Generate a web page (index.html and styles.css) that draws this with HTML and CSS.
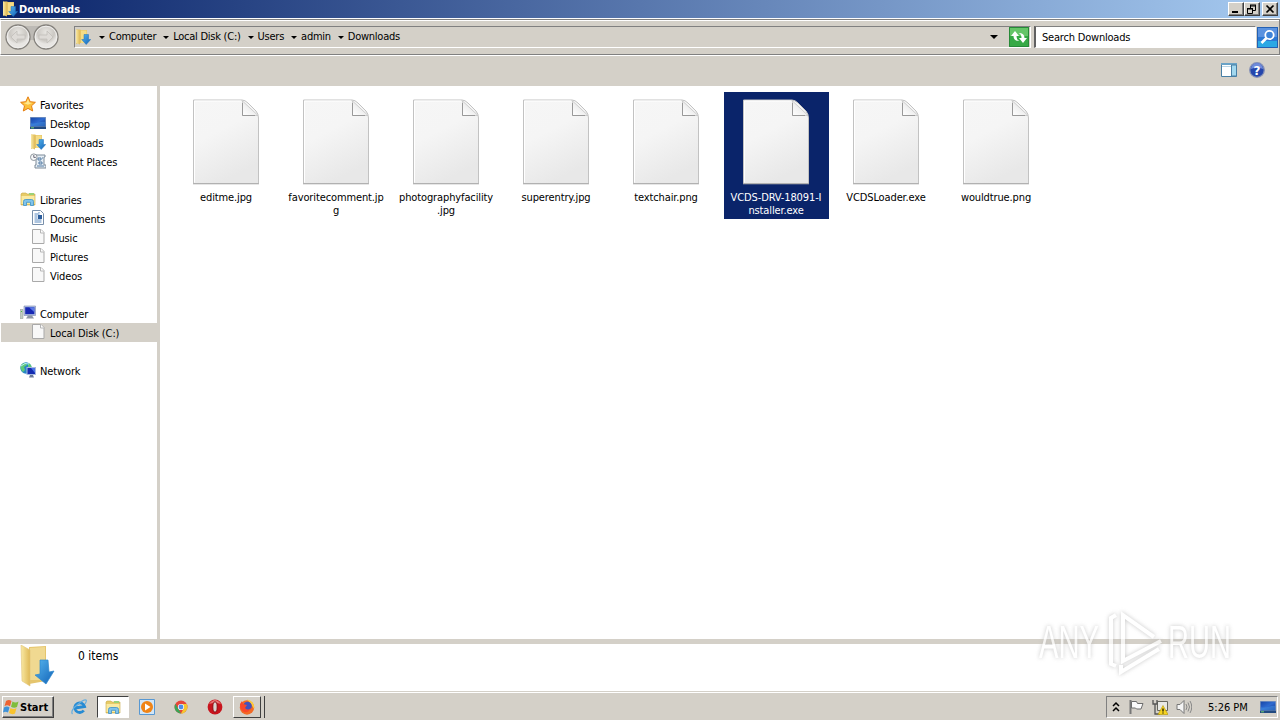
FILE: index.html
```html
<!DOCTYPE html>
<html lang="en">
<head>
    <meta charset="UTF-8">
    <title>Downloads</title>
    <link rel="stylesheet" href="styles.css">
</head>
<body>
    <!-- shared icons -->
    <svg class="defs" width="0" height="0">
        <defs>
            <linearGradient id="gold" x1="0" x2="1"><stop offset="0" stop-color="#f9e9a4"/><stop offset="1" stop-color="#dfb956"/></linearGradient>
            <linearGradient id="blue" x1="0" x2="1" y2="1"><stop offset="0" stop-color="#56b5ee"/><stop offset="1" stop-color="#1263b8"/></linearGradient>
            <linearGradient id="screen" x1="0" x2="1" y2="1"><stop offset="0" stop-color="#1746a8"/><stop offset=".5" stop-color="#2e6bd0"/><stop offset="1" stop-color="#0c2f86"/></linearGradient>
            <linearGradient id="paper" x1="0" x2=".4" y2="1"><stop offset="0" stop-color="#f6f6f6"/><stop offset=".45" stop-color="#f5f5f5"/><stop offset="1" stop-color="#e8e8e8"/></linearGradient>
            <linearGradient id="fold" x1="0" y1="1" x2="1" y2="0"><stop offset="0" stop-color="#fff"/><stop offset=".5" stop-color="#eee"/><stop offset="1" stop-color="#bbb"/></linearGradient>
            <radialGradient id="orb" cx=".5" cy=".3"><stop offset="0" stop-color="#e8e6e2"/><stop offset=".7" stop-color="#cbc8c3"/><stop offset="1" stop-color="#e8e6e3"/></radialGradient>
            <symbol id="i-down" viewBox="0 0 16 16">
                <path d="M1 .5h4l1 .5h6v13H3L1 15z" fill="#e6c362"/>
                <path d="M1 .5l4 1.500v13.500L1 14z" fill="url(#gold)"/>
                <path d="M6 1.500h5.500V14H6z" fill="#f4dc86"/>
                <path d="M9 5.500h4.500v5h2.200L11.200 15.500 6.700 10.500H9z" fill="url(#blue)" stroke="#1c70bd" stroke-width=".5"/>
            </symbol>
            <symbol id="i-star" viewBox="0 0 16 16">
                <path d="M8 .8l2.200 4.900 5.200.6-3.900 3.500 1.200 5.200L8 12.400 3.300 15l1.200-5.200L.6 6.300l5.200-.6z" fill="#fcc03a" stroke="#e57e12"/>
                <path d="M8 3l1.300 3.600 3 .4-4.300 1.800L3.500 7l3-.4z" fill="#ffe890"/>
            </symbol>
            <symbol id="i-desk" viewBox="0 0 16 16">
                <path d="M0 2h16v11H0z" fill="#8199bd"/><path d="M.7 2.700h14.600v8.600H.7z" fill="url(#screen)"/>
                <path d="M.7 8C5 10 10 6 15.300 7v4.300H.7z" fill="#3f8bdd" opacity=".6"/>
                <path d="M0 11.700h16V14H0z" fill="#224a80"/><path d="M1 12.300h3v1H1z" fill="#6fcf6d"/>
            </symbol>
            <symbol id="i-recent" viewBox="0 0 16 16">
                <path d="M6 2h9v2h-1v8h2v3H5v-3h1z" fill="#e6eef5" stroke="#7c8a98"/>
                <path d="M8 5h3v2H8zM9 9h3v2H9zM12 5h1M7 13h7" fill="none" stroke="#527aa3"/>
                <circle cx="3.800" cy="4.200" r="3.300" fill="#f7f8f9" stroke="#90989f"/><path d="M3.800 2v2.400h2" fill="none" stroke="#667"/>
            </symbol>
            <symbol id="i-lib" viewBox="0 0 16 16">
                <path d="M1 3l1-1h4l1 1h8v11H1z" fill="#e7cb68" stroke="#c8a847" stroke-width=".6"/>
                <path d="M1.500 5h13v8h-13z" fill="#faeaa2"/><path d="M9 2h5v2H9z" fill="#9bd178"/>
                <path d="M3.500 14.500v-4q0-2 2-2h6q2 0 2 2v4h-3v-3.200h-4v3.200z" fill="#80c3ea" stroke="#3b91c9" stroke-width=".8"/>
            </symbol>
            <symbol id="i-doc" viewBox="0 0 16 16">
                <path d="M2.500.5h8l3 3v11h-11z" fill="#fff" stroke="#7990ab"/>
                <path d="M4.500 4h5M4.500 6h3M4.500 8h3M4.500 10h7M4.500 12h7M9 2v1" stroke="#5c8bc0" fill="none"/><path d="M8 5h4v4H8z" fill="#2c5d9c"/>
            </symbol>
            <symbol id="i-file" viewBox="0 0 16 16">
                <path d="M2.500.5h8.500l3 3v11H2.500z" fill="#f8f8f8" stroke="#a9a9a9"/><path d="M10.500.5v3.500h3.500" fill="#fff" stroke="#b5b5b5"/>
            </symbol>
            <symbol id="i-pc" viewBox="0 0 16 16">
                <path d="M0 4.500h3v9H0z" fill="#c1cbc3" stroke="#8b958f" stroke-width=".5"/><path d="M1 6h1v1H1z" fill="#49bd3c"/>
                <path d="M4 1h11.500v9.500H4z" fill="#b6c3e1" stroke="#7a88ae" stroke-width=".6"/><path d="M5.200 2.200h9.200v7H5.200z" fill="#1728b4"/>
                <path d="M9 2.200h5.400v5z" fill="#5a79e4"/><path d="M8 10.500h4l2 3H6z" fill="#8d96a6"/>
            </symbol>
            <symbol id="i-net" viewBox="0 0 16 16">
                <circle cx="6" cy="6" r="5.700" fill="#2686c4"/><path d="M2 2c3-2 5-1 5 1L4 5l1 3-2 2C0 7 0 4 2 2zM8 1c3 1 4 3 3 5L8 5z" fill="#5fc978"/><path d="M1 4q4-4 8-2" stroke="#b9edf8" fill="none"/>
                <path d="M6.500 5H16v8H6.500z" fill="#a8b9df"/><path d="M7.500 6H15v6H7.500z" fill="#142bb0"/><path d="M11 6h4v5z" fill="#4a73e6"/><path d="M10 13h3l1 2.500H9z" fill="#6b7a98"/>
            </symbol>
            <symbol id="i-paper" viewBox="0 0 68 88">
                <path d="M1.500 2H50q3 0 6 3l8 8q2.500 3 2.500 7v65.500h-65z" fill="url(#paper)" stroke="#c2c2c2"/>
                <path d="M1 85.800h66" stroke="#aaa"/>
                <path d="M2.500 84.500V3H49" fill="none" stroke="#fff"/>
                <path d="M50.500 3v14.500h15.500z" fill="url(#fold)" stroke="#c4c4c4" stroke-width=".8"/>
                <path d="M50.500 5v12.500H63" fill="none" stroke="#999"/>
            </symbol>
        </defs>
    </svg>

    <header class="titlebar">
        <svg class="ico"><use href="#i-down"/></svg>
        <h1>Downloads</h1>
        <div class="winbtns">
            <button><svg width="12" height="10"><path d="M2 8h6" stroke="#000" stroke-width="2"/></svg></button>
            <button><svg width="12" height="10"><path d="M4 1h6M4 2h6M1 4.500h6M1 5h6" stroke="#000"/><path d="M4.500 1v3M9.500 1v5.500H7M1.500 4v5.500h5v-5" fill="none" stroke="#000"/></svg></button>
            <button class="close"><svg width="12" height="10"><path d="M2.500 1.500l7 7M9.500 1.500l-7 7" stroke="#000" stroke-width="1.700"/></svg></button>
        </div>
    </header>

    <div class="navbar">
        <svg class="orbs" width="56" height="28">
            <path d="M14 3h28v14H14z" fill="#bdbab5"/>
            <g fill="url(#orb)" stroke="#85827d" stroke-width="1.300"><circle cx="14" cy="14" r="12"/><circle cx="42" cy="14" r="12"/></g>
            <g fill="none" stroke="#f0efed"><circle cx="14" cy="14" r="10.800"/><circle cx="42" cy="14" r="10.800"/></g>
            <g fill="#dedbd7" stroke="#c2bfba" stroke-width=".8"><path d="M7 14l6-6v4h8v4h-8v4zM49 14l-6-6v4h-8v4h8v4z"/></g>
        </svg>
        <div class="address">
            <svg class="ico"><use href="#i-down"/></svg>
            <i class="arr first"></i><span>Computer</span>
            <i class="arr"></i><span>Local Disk (C:)</span>
            <i class="arr"></i><span>Users</span>
            <i class="arr"></i><span>admin</span>
            <i class="arr"></i><span>Downloads</span>
            <i class="arr drop"></i>
            <svg class="refresh" width="20" height="20" viewBox="0 0 20 20">
                <path d="M0 0h20v20H0z" fill="#36a945"/><path d="M1 1h18v8H1z" fill="#65c568"/><path d="M.5.500h19v19H.5z" fill="none" stroke="#278a38"/>
                <path d="M2 9l4-5 4 5H7.500q0 4 3 5-6 0-6-5zM18 11l-4 5-4-5h2.500q0-4-3-5 6 0 6 5z" fill="#fff"/>
            </svg>
        </div>
        <div class="search">Search Downloads</div>
        <svg class="go" width="21" height="21" viewBox="0 0 21 21">
            <path d="M0 0h21v21H0z" fill="#2c78d4"/><path d="M1 1h19v9H1z" fill="#5a92e0"/><path d="M1 14h19v6H1z" fill="#2ba8e4"/><path d="M.5.500h20v20H.5z" fill="none" stroke="#2460b2"/>
            <circle cx="12.500" cy="8" r="4.200" fill="#3e83d8" stroke="#fff" stroke-width="1.800"/><path d="M9.500 11l-5 5" stroke="#fff" stroke-width="2.600"/>
        </svg>
    </div>

    <div class="toolbar">
        <svg width="16" height="14"><path d="M.5.500h15v13H.5z" fill="#fff" stroke="#477fa5"/><path d="M0 0h16v2H0z" fill="#6ba3c6"/><path d="M1 3.500h9" stroke="#b9d4e4"/><path d="M10.500 2h5v11h-5z" fill="#a2d8ef" stroke="#477fa5"/></svg>
        <svg width="16" height="16"><circle cx="8" cy="8" r="7.300" fill="#2546ac" stroke="#8792b7" stroke-width="1.300"/><path d="M2 7a6 6 0 0 1 12 0q-6-3-12 0z" fill="#6f8bdb"/><text x="8" y="12.500" class="qm">?</text></svg>
    </div>

    <main>
        <nav>
            <ul>
                <li><svg class="ico"><use href="#i-star"/></svg><span>Favorites</span></li>
                <li class="sub"><svg class="ico"><use href="#i-desk"/></svg><span>Desktop</span></li>
                <li class="sub"><svg class="ico"><use href="#i-down"/></svg><span>Downloads</span></li>
                <li class="sub"><svg class="ico"><use href="#i-recent"/></svg><span>Recent Places</span></li>
                <li></li>
                <li><svg class="ico"><use href="#i-lib"/></svg><span>Libraries</span></li>
                <li class="sub"><svg class="ico"><use href="#i-doc"/></svg><span>Documents</span></li>
                <li class="sub"><svg class="ico"><use href="#i-file"/></svg><span>Music</span></li>
                <li class="sub"><svg class="ico"><use href="#i-file"/></svg><span>Pictures</span></li>
                <li class="sub"><svg class="ico"><use href="#i-file"/></svg><span>Videos</span></li>
                <li></li>
                <li><svg class="ico"><use href="#i-pc"/></svg><span>Computer</span></li>
                <li class="sub active"><svg class="ico"><use href="#i-file"/></svg><span>Local Disk (C:)</span></li>
                <li></li>
                <li><svg class="ico"><use href="#i-net"/></svg><span>Network</span></li>
            </ul>
        </nav>
        <section class="files">
            <figure><svg><use href="#i-paper"/></svg><figcaption>editme.jpg</figcaption></figure>
            <figure><svg><use href="#i-paper"/></svg><figcaption>favoritecomment.jp<br>g</figcaption></figure>
            <figure><svg><use href="#i-paper"/></svg><figcaption>photographyfacility<br>.jpg</figcaption></figure>
            <figure><svg><use href="#i-paper"/></svg><figcaption>superentry.jpg</figcaption></figure>
            <figure><svg><use href="#i-paper"/></svg><figcaption>textchair.png</figcaption></figure>
            <figure class="selected"><svg><use href="#i-paper"/></svg><figcaption>VCDS-DRV-18091-I<br>nstaller.exe</figcaption></figure>
            <figure><svg><use href="#i-paper"/></svg><figcaption>VCDSLoader.exe</figcaption></figure>
            <figure><svg><use href="#i-paper"/></svg><figcaption>wouldtrue.png</figcaption></figure>
        </section>
    </main>

    <div class="details">
        <svg width="36" height="42" viewBox="0 0 36 42">
            <path d="M9 2l17-1v35l-17 3z" fill="#e5c56d"/><path d="M10 3l15-1v33H10z" fill="#f0d991"/>
            <path d="M1 0l9 5v36L2 36z" fill="url(#gold)" stroke="#e0c478" stroke-width=".6"/>
            <path d="M20 15h8l1 12 5-1-8 13-11-9 5-1z" fill="url(#blue)" stroke="#2c86cd" stroke-width=".7"/>
        </svg>
        <span>0 items</span>
    </div>

    <footer>
        <button class="start">
            <svg width="17" height="16" viewBox="0 0 17 16"><path d="M3 2q3-2 5.500 0L7 7.200Q4 5.500 1.500 7.200z" fill="#ee6331"/><path d="M9.500 2.500q3 2 6 0L14 8q-3 1.500-6-.3z" fill="#7fbd3c"/><path d="M1 8.500q3-2 5.500 0L5 13.500Q2.500 12 0 13.500z" fill="#3e92d8"/><path d="M7.500 9q3 2 6 0L12 14.500q-3 1.500-6-.5z" fill="#f8c32e"/></svg>Start
        </button>
        <div class="tasks">
            <div class="task"><svg class="ico" viewBox="0 0 16 16"><path d="M12.800 11.500a5 4.800 0 1 1 .8-4L4 9" fill="none" stroke="#278bd3" stroke-width="2.800"/><path d="M1.500 15Q-1 12 6 6t9-5q1 1-1 4" fill="none" stroke="#65aee0" stroke-width="1.200"/></svg></div>
            <div class="task pressed"><svg class="ico"><use href="#i-lib"/></svg></div>
            <div class="task"><svg class="ico" viewBox="0 0 16 16"><path d="M.5.500h15v15H.5z" fill="#d2e6f7" stroke="#5898d2"/><circle cx="8" cy="8" r="6" fill="#f08416"/><path d="M6 4.500l5.500 3.500L6 11.500z" fill="#fff"/></svg></div>
            <div class="task"><svg class="ico" viewBox="0 0 16 16"><circle cx="8" cy="8" r="6.500" fill="#e6463a"/><path d="M2.400 4.800L6 11l2 3.500A6.500 6.500 0 0 1 2.400 4.800z" fill="#39a457"/><path d="M8 5h5.700A6.500 6.500 0 0 1 8 14.500L11 9z" fill="#f4c72e"/><circle cx="8" cy="8" r="3.100" fill="#fff"/><circle cx="8" cy="8" r="2.400" fill="#4d8ce8"/></svg></div>
            <div class="task"><svg class="ico" viewBox="0 0 16 16"><circle cx="8" cy="8" r="7.400" fill="#c8141d"/><path d="M2 5q6-8 12 0-6-2-12 0z" fill="#e87171"/><ellipse cx="8" cy="8" rx="2.200" ry="5.200" fill="#d9d3ce" stroke="#8d0b12"/></svg></div>
            <div class="task raised"><svg class="ico" viewBox="0 0 16 16"><circle cx="8" cy="8.500" r="7.200" fill="#f26a25"/><path d="M8 .5q8.500 2 7 9.500Q12 4 8 .5z" fill="#ffcb38"/><circle cx="8.500" cy="7" r="4.300" fill="#4252bd"/><path d="M1 5l2-3 1 3 4 1-2 3q3 3 6 0-2 5-7 4Q1 11 1 5z" fill="#f9472b"/></svg></div>
        </div>
        <div class="tray">
            <svg width="8" height="12"><path d="M1 5l3-3 3 3M1 10l3-3 3 3" fill="none" stroke="#000" stroke-width="1.500"/></svg>
            <svg width="16" height="16"><path d="M2.500 1v14" stroke="#777" stroke-width="2"/><path d="M3.500 2.500h5l1 2h5.500l-2 5.500H8.500l-1-1h-4z" fill="#fafafa" stroke="#6d6d6d"/></svg>
            <svg width="16" height="16"><path d="M5.500 2.500h10v9h-10z" fill="#e8e8e5" stroke="#66665f"/><path d="M1 1v4h4V1M3 5v10h5" fill="none" stroke="#555" stroke-width="1.300"/><path d="M11 6.500l5 9H6z" fill="#f7d420" stroke="#b39500" stroke-width=".6"/><path d="M11 9.500v3M11 13.500v1" stroke="#000" stroke-width="1.200"/></svg>
            <svg width="16" height="16"><path d="M1 5.500h3l4-4v13l-4-4H1z" fill="#f5f5f5" stroke="#777"/><path d="M10 5q2 3 0 6M12 3.500q3 4.500 0 9M14 2q3.500 6 0 12" fill="none" stroke="#888"/></svg>
            <span>5:26 PM</span>
            <svg class="ico"><use href="#i-desk"/></svg>
        </div>
    </footer>

    <svg class="watermark" width="230" height="80" viewBox="0 0 230 80">
        <text x="9" y="53" textLength="60" lengthAdjust="spacingAndGlyphs">ANY</text>
        <text x="138" y="53" textLength="63" lengthAdjust="spacingAndGlyphs">RUN</text>
        <path d="M86 10l-5 3v46l5 2M124 32L93 10v46l38-20M91 60v7l38-23" />
    </svg>
</body>
</html>
```
FILE: styles.css
```css
:root {
    --face: #d4d0c8;
    --navy: #0a246a;
    --shadow: #808080;
}

* {
    box-sizing: border-box;
    margin: 0;
    padding: 0;
}

body {
    width: 1280px;
    height: 720px;
    overflow: hidden;
    display: flex;
    flex-direction: column;
    position: relative;
    background: #fff;
    color: #000;
    font: 11px/13px "DejaVu Sans Condensed", Tahoma, sans-serif;
    letter-spacing: -0.12px;
}

.defs {
    position: absolute;
}

svg {
    flex: none;
    display: block;
}

.ico {
    width: 16px;
    height: 16px;
}

button {
    font: inherit;
    background: var(--face);
    border: 1px solid;
    border-color: #fff #404040 #404040 #fff;
    box-shadow: inset -1px -1px var(--shadow);
}

.titlebar {
    height: 18px;
    flex: none;
    display: flex;
    align-items: center;
    padding: 0 2px;
    background: linear-gradient(90deg, var(--navy), #a6caf0);
    color: #fff;
}

.titlebar h1 {
    font-size: 11px;
    margin-left: 1px;
    letter-spacing: 0;
}

.winbtns {
    display: flex;
    margin-left: auto;
}

.winbtns button {
    width: 16px;
    height: 14px;
    padding: 1px;
}

.winbtns .close {
    margin-left: 2px;
}

.navbar {
    height: 36px;
    margin-top: 1px;
    flex: none;
    display: flex;
    align-items: center;
    background: var(--face);
    border: 1px solid var(--shadow);
    border-left-color: #fff;
    box-shadow: inset 0 1px #fff;
    padding-left: 3px;
}

.address {
    display: flex;
    align-items: center;
    width: 957px;
    height: 22px;
    margin-left: 14px;
    border: 1px solid #fff;
    border-top-color: var(--shadow);
    border-left-color: var(--shadow);
}

.address span {
    padding-bottom: 2px;
    letter-spacing: -0.25px;
}

.arr {
    border: 3px solid transparent;
    border-top-color: #000;
    border-bottom: 0;
    margin: 0 4px 0 7px;
}

.first {
    margin-left: 8px;
}

.drop {
    border-width: 4px 4px 0;
    margin: 0 11px 0 auto;
}

.refresh {
    margin-right: 1px;
}

.search {
    width: 222px;
    height: 22px;
    margin-left: 3px;
    background: #fff;
    border: 1px solid #fff;
    border-top-color: var(--shadow);
    border-left: 2px solid #606060;
    padding: 4px 6px;
    letter-spacing: -0.2px;
}

.go {
    margin-left: 1px;
}

.toolbar {
    height: 31px;
    flex: none;
    display: flex;
    align-items: center;
    justify-content: flex-end;
    gap: 12px;
    padding: 0 15px 2px 0;
    background: var(--face);
    border-top: 1px solid #fff;
}

.qm {
    font: bold 12px "DejaVu Sans", sans-serif;
    fill: #fff;
    text-anchor: middle;
}

main {
    height: 553px;
    flex: none;
    display: flex;
}

nav {
    width: 160px;
    padding: 9px 0 0 1px;
    border-right: 3px solid var(--face);
}

nav li {
    display: flex;
    align-items: center;
    gap: 4px;
    height: 19px;
    padding-left: 19px;
    list-style: none;
}

nav li .ico {
    margin-bottom: 1px;
}

nav li span {
    padding-top: 2px;
}

nav .sub {
    padding-left: 29px;
}

nav .active {
    background: var(--face);
}

.files {
    display: flex;
    align-items: flex-start;
    gap: 5px;
    padding: 6px 0 0 14px;
}

figure {
    width: 105px;
    height: 127px;
    padding-top: 6px;
    text-align: center;
}

figure svg {
    width: 68px;
    height: 88px;
    margin: 0 auto 5px 18px;
}

figcaption {
    padding-right: 1px;
}

.selected {
    background: var(--navy);
    color: #fff;
}

.details {
    height: 53px;
    flex: none;
    display: flex;
    gap: 22px;
    padding-left: 20px;
    border-top: 5px solid var(--face);
    border-bottom: 1px solid var(--face);
}

.details svg {
    margin-top: 1px;
}

.details span {
    font-size: 12px;
    margin-top: 6px;
    letter-spacing: 0;
}

footer {
    flex: 1;
    display: flex;
    align-items: flex-start;
    background: var(--face);
    border-top: 1px solid #fff;
    padding: 3px 2px 0;
}

.start {
    display: flex;
    align-items: center;
    width: 52px;
    height: 22px;
    padding-left: 0;
    font-weight: bold;
    letter-spacing: 0;
}

.tasks {
    display: flex;
    gap: 2px;
    margin-left: 9px;
}

.task {
    width: 32px;
    height: 22px;
    display: flex;
    align-items: center;
    justify-content: center;
}

.pressed {
    background: #fff;
    border: 1px solid #fff;
    border-top-color: #404040;
    border-left-color: #404040;
}

.raised {
    width: 28px;
    border: 1px solid #404040;
    border-top-color: #fff;
    border-left-color: #fff;
    box-shadow: 3px 0 var(--face), 4px 0 #404040;
}

.tray {
    display: flex;
    align-items: center;
    height: 22px;
    width: 172px;
    margin-left: auto;
    padding-left: 5px;
    gap: 8px;
    border: 1px solid #fff;
    border-top-color: var(--shadow);
    border-left-color: var(--shadow);
}

.tray span {
    margin: 0 4px 0 8px;
    white-space: nowrap;
    letter-spacing: 0;
}

/* logo laid over the desktop */
.watermark {
    position: absolute;
    left: 1030px;
    top: 605px;
    fill: #fff;
    opacity: .75;
    filter: drop-shadow(0 0 2px #b4b4b4);
}

.watermark text {
    font: 46px/1 "Liberation Sans Narrow", "Liberation Sans", sans-serif;
    letter-spacing: 0;
}

.watermark path {
    fill: none;
    stroke: #fff;
    stroke-width: 4;
}
```
